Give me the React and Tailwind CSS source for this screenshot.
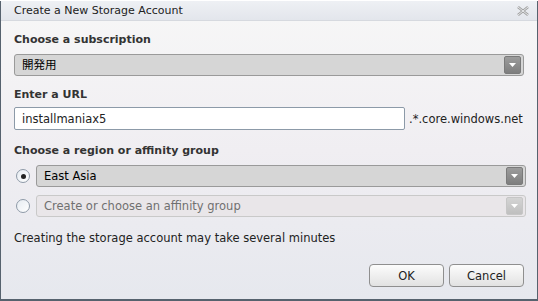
import { useState } from "react";

function Arrow({ disabled }) {
  return (
    <div
      className={`w-[17px] h-[18px] rounded-[2px] flex items-center justify-center border ${
        disabled
          ? "bg-gradient-to-b from-[#d4d4d4] to-[#bfbfbf] border-[#c6c6c6]"
          : "bg-gradient-to-b from-[#9c9c9c] to-[#7e7e7e] border-[#7a7a7a]"
      }`}
    >
      <svg width="7" height="4" viewBox="0 0 7 4">
        <path d="M0 0h7L3.5 4z" fill="#fff" />
      </svg>
    </div>
  );
}

function Select({ value, disabled }) {
  return (
    <div
      className={`flex-1 h-[22px] rounded-[3px] border flex items-center pl-[7px] pr-[2px] ${
        disabled
          ? "bg-[#e9e6e9] border-[#c9c9c9] text-[#707070]"
          : "bg-[#d6d6d6] border-[#9a9a9a] text-black"
      }`}
    >
      <span className="flex-1 truncate">{value}</span>
      <Arrow disabled={disabled} />
    </div>
  );
}

function Radio({ checked, onClick }) {
  return (
    <button
      onClick={onClick}
      className="w-[14px] h-[14px] rounded-full border border-[#8e9aa8] bg-gradient-to-br from-[#e6ebf1] to-[#ffffff] flex items-center justify-center shrink-0"
    >
      {checked && <span className="w-[5px] h-[5px] rounded-full bg-[#222]" />}
    </button>
  );
}

export default function App() {
  const [region, setRegion] = useState(0);
  const [url, setUrl] = useState("installmaniax5");

  return (
    <div
      className="w-[538px] h-[301px] bg-[#56626e] text-[11.5px] leading-[14px] text-[#222]"
      style={{ fontFamily: "'DejaVu Sans', 'Noto Sans CJK JP', sans-serif" }}
    >
      <div className="w-[536px] h-[298px] ml-[1px] mt-[1px] flex flex-col bg-gradient-to-b from-[#f7f7f7] via-[#f0eef2] to-[#e6e8ee]">
        {/* title */}
        <div className="h-[20px] flex items-center justify-between pl-[13px] pr-[8px] bg-gradient-to-b from-[#eef0f4] to-[#e3e6ec] border-b border-[#d6d9df]">
          <span className="pt-[1px] text-[11px]">Create a New Storage Account</span>
          <svg width="12" height="10" viewBox="0 0 12 10">
            <path d="M1 1l10 8M11 1L1 9" stroke="#a0a0a0" strokeWidth="2.6" />
            <path d="M1 1l10 8M11 1L1 9" stroke="#eef0f3" strokeWidth="0.9" />
          </svg>
        </div>

        <div className="flex-1 flex flex-col pl-[13px] pr-[11px]">
          <div className="font-bold text-[11px] text-[#333] mt-[12px]">Choose a subscription</div>
          <div className="flex mt-[7px] pr-[2px]">
            <Select value="開発用" />
          </div>

          <div className="font-bold text-[11px] text-[#333] mt-[12px]">Enter a URL</div>
          <div className="flex items-center mt-[5px]">
            <input
              value={url}
              onChange={(e) => setUrl(e.target.value)}
              className="w-[391px] h-[23px] bg-white border border-[#8c9aa8] rounded-[2px] px-[7px] outline-none"
            />
            <span className="ml-[4px]">.*.core.windows.net</span>
          </div>

          <div className="font-bold text-[11px] text-[#333] mt-[14px]">Choose a region or affinity group</div>
          <div className="flex items-center gap-[6px] mt-[7px] pl-[2px]">
            <Radio checked={region === 0} onClick={() => setRegion(0)} />
            <Select value="East Asia" />
          </div>
          <div className="flex items-center gap-[6px] mt-[8px] pl-[2px]">
            <Radio checked={region === 1} onClick={() => setRegion(1)} />
            <Select value="Create or choose an affinity group" disabled />
          </div>

          <div className="mt-[14px]">Creating the storage account may take several minutes</div>

          <div className="flex justify-end gap-[5px] mt-[19px] pr-[2px]">
            <button className="w-[75px] h-[23px] rounded-[4px] border border-[#8f8f8f] bg-gradient-to-b from-[#fcfcfc] to-[#e2e2e2] text-[#222]">
              OK
            </button>
            <button className="w-[75px] h-[23px] rounded-[4px] border border-[#8f8f8f] bg-gradient-to-b from-[#fcfcfc] to-[#e2e2e2] text-[#222]">
              Cancel
            </button>
          </div>
        </div>
      </div>
    </div>
  );
}
